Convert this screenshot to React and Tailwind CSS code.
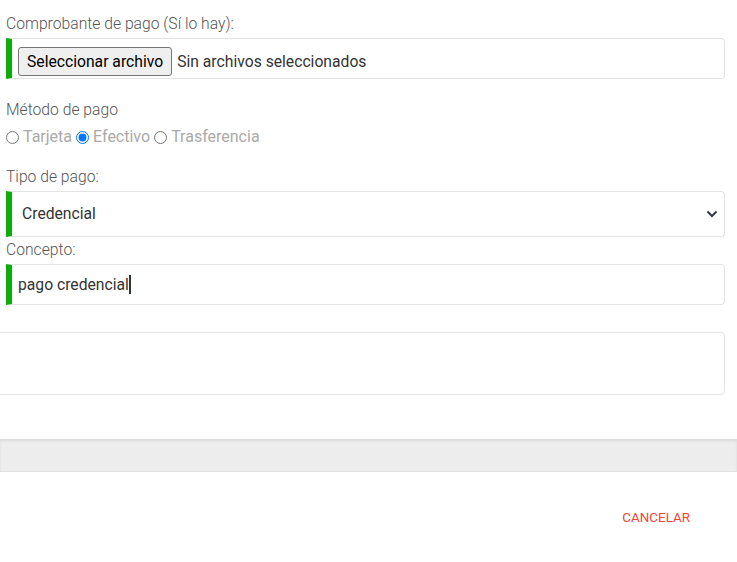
import { useState } from 'react';

function GreenField({ height, children, className = '' }) {
  return (
    <div
      className={`flex items-center border border-[#e3e3e3] border-l-[6px] border-l-[#0aad0a] rounded-r-[4px] bg-white ${className}`}
      style={{ height }}
    >
      {children}
    </div>
  );
}

export default function App() {
  const [metodo, setMetodo] = useState('efectivo');

  return (
    <div className="w-[737px] h-[562px] bg-white overflow-hidden font-['Roboto','Liberation_Sans',sans-serif]">
      <div className="pl-[6px] pr-[12px] pt-[14px]">
        {/* Comprobante */}
        <label className="block text-[15.7px] leading-[20px] font-light text-[#555]">
          Comprobante de pago (Sí lo hay):
        </label>
        <GreenField height={41} className="mt-[4px] pt-[6px]">
          <button
            type="button"
            className="ml-[6px] h-[29px] px-[8px] bg-[#efefef] border border-[#767676] rounded-[3px] text-[15.7px] text-black leading-none"
          >
            Seleccionar archivo
          </button>
          <span className="ml-[5px] text-[15.7px] text-[#333]">Sin archivos seleccionados</span>
        </GreenField>

        {/* Metodo de pago */}
        <label className="block mt-[21px] text-[15.7px] leading-[20px] font-light text-[#555]">
          Método de pago
        </label>
        <div className="mt-[7px] h-[20px] flex items-center text-[16px] text-[#aaaaaa]">
          {[
            ['tarjeta', 'Tarjeta'],
            ['efectivo', 'Efectivo'],
            ['transferencia', 'Trasferencia'],
          ].map(([val, txt]) => (
            <label key={val} className="flex items-center mr-[4px]">
              <input
                type="radio"
                name="metodo"
                checked={metodo === val}
                onChange={() => setMetodo(val)}
                className="m-0 mr-[4px] w-[13px] h-[13px]"
              />
              {txt}
            </label>
          ))}
        </div>

        {/* Tipo de pago */}
        <label className="block mt-[20px] text-[15.7px] leading-[20px] font-light text-[#555]">
          Tipo de pago:
        </label>
        <GreenField height={46} className="mt-[4px] justify-between">
          <span className="ml-[10px] text-[15.7px] text-[#333]">Credencial</span>
          <svg width="12" height="8" viewBox="0 0 12 8" className="mr-[6px]">
            <path d="M1.5 1.5 L6 6 L10.5 1.5" fill="none" stroke="#343a40" strokeWidth="2" />
          </svg>
        </GreenField>

        {/* Concepto */}
        <label className="block mt-[3px] text-[15.7px] leading-[20px] font-light text-[#555]">
          Concepto:
        </label>
        <GreenField height={41} className="mt-[4px]">
          <span className="ml-[6px] text-[15.7px] text-[#333]">pago credencial</span>
          <span className="w-[2px] h-[19px] bg-[#333]"></span>
        </GreenField>

        {/* Observaciones */}
        <div className="mt-[27px] -ml-[20px] h-[63px] border border-[#e3e3e3] rounded-r-[4px]"></div>
      </div>

      {/* barra gris */}
      <div className="mt-[44px] h-[33px] bg-[#ededed] border-b border-[#e2e2e2] shadow-[inset_0_2px_3px_rgba(0,0,0,0.08)]"></div>

      <div className="flex justify-end pr-[47px] pt-[38px]">
        <button type="button" className="text-[13.4px] leading-[16px] uppercase text-[#f44336]">
          Cancelar
        </button>
      </div>
    </div>
  );
}
